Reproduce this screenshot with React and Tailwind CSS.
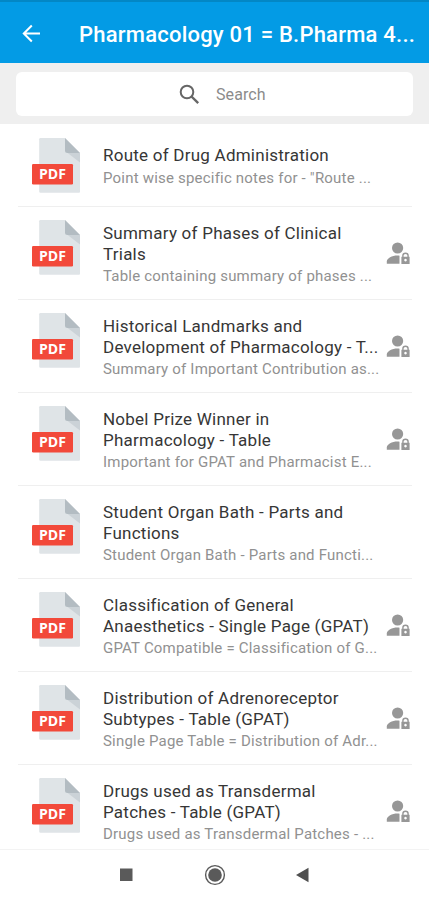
const items = [
  { title: ['Route of Drug Administration'], sub: 'Point wise specific notes for - "Route ...', locked: false },
  { title: ['Summary of Phases of Clinical', 'Trials'], sub: 'Table containing summary of phases ...', locked: true },
  { title: ['Historical Landmarks and', 'Development of Pharmacology - T...'], sub: 'Summary of Important Contribution as...', locked: true },
  { title: ['Nobel Prize Winner in', 'Pharmacology - Table'], sub: 'Important for GPAT and Pharmacist E...', locked: true },
  { title: ['Student Organ Bath - Parts and', 'Functions'], sub: 'Student Organ Bath - Parts and Functi...', locked: false },
  { title: ['Classification of General', 'Anaesthetics - Single Page (GPAT)'], sub: 'GPAT Compatible = Classification of G...', locked: true },
  { title: ['Distribution of Adrenoreceptor', 'Subtypes - Table (GPAT)'], sub: 'Single Page Table = Distribution of Adr...', locked: true },
  { title: ['Drugs used as Transdermal', 'Patches - Table (GPAT)'], sub: 'Drugs used as Transdermal Patches - ...', locked: true },
];

function PdfIcon() {
  return (
    <div className="relative h-[55px] w-[49px] shrink-0">
      <svg className="block" width="49" height="55" viewBox="0 0 49 55">
        <path d="M8.5 0H33l15 15v38.7a1 1 0 0 1-1 1H8.5a1.3 1.3 0 0 1-1.3-1.3V1.3A1.3 1.3 0 0 1 8.5 0z" fill="#dfe4e7" />
        <path d="M35 14.5 48 24.500V15z" fill="#cbd2d7" />
        <path d="M33 0l15 15H35.500a2.500 2.500 0 0 1-2.500-2.500z" fill="#b3bcc2" />
        <rect x="0" y="26" width="41" height="20.600" rx="1.300" fill="#f2493a" />
      </svg>
      <span className="absolute left-0 top-[25px] w-[41px] text-center font-['Open_Sans',sans-serif] text-[14px] font-bold leading-[21px] text-white">PDF</span>
    </div>
  );
}

function UserLockIcon() {
  return (
    <svg className="block shrink-0" width="24" height="23" viewBox="0 0 24 23" fill="#979797">
      <circle cx="11.600" cy="6" r="5.600" />
      <path d="M.8 21.700v-2.200c0-3.200 5.200-5.900 10.700-5.900.9 0 1.500.1 2 .2v7.900z" />
      <path fillRule="evenodd" d="M16.200 14.800v-1a3.300 3.300 0 0 1 6.600 0v1h.8v7.100h-8.200v-7.100zm1.400 0h3.800v-1a1.900 1.900 0 0 0-3.800 0zm1.900 2a1.300 1.300 0 1 0 .01 0z" />
    </svg>
  );
}

function Row({ item, last }) {
  const single = item.title.length === 1;
  return (
    <li className="relative flex h-[93px] pl-8 pt-[13px] first:h-[83px] first:pt-[14px]">
      <PdfIcon />
      <div className={`ml-[22px] w-[276px] shrink-0 whitespace-nowrap ${single ? 'pt-[7px]' : 'pt-[3px]'}`}>
        {item.title.map((line) => (
          <div key={line} className="text-[17px] leading-[21px] tracking-[0.24px] text-[#363636]">{line}</div>
        ))}
        <div className={`text-[15px] leading-[22px] tracking-[0.2px] text-[#919191] ${single ? 'mt-px' : ''}`}>{item.sub}</div>
      </div>
      {item.locked && <div className="ml-[7px] pt-[22px]"><UserLockIcon /></div>}
      {!last && <div className="absolute bottom-0 left-[18px] right-[17px] h-px bg-[#efefef]" />}
    </li>
  );
}

export default function App() {
  return (
    <div className="flex h-[900px] w-[429px] flex-col overflow-hidden bg-white font-[Roboto,sans-serif]">
      <header className="flex h-[63px] shrink-0 items-center border-t-2 border-[#0387c5] bg-[#039be5] pl-[21px] pt-[2px]">
        <svg width="20" height="20" viewBox="0 0 20 20" fill="none" stroke="#fff" strokeWidth="2">
          <path d="M19 9.500H3M10.800 1.500l-8 8 8 8" />
        </svg>
        <h1 className="ml-[38px] whitespace-nowrap pt-[2px] text-[22px] font-medium leading-7 tracking-[0.22px] text-white">Pharmacology 01 = B.Pharma 4...</h1>
      </header>
      <div className="h-[61px] shrink-0 bg-[#efefef] px-4 pt-[9px]">
        <div className="flex h-[44px] items-center rounded-md bg-white pl-[163px]">
          <svg width="21" height="21" viewBox="0 0 21 21" fill="none" stroke="#666" strokeWidth="2">
            <circle cx="8" cy="8" r="6.300" />
            <path d="m12.500 12.500 6.700 6.700" strokeWidth="2.400" />
          </svg>
          <span className="ml-4 pt-px text-[16px] leading-6 tracking-[0.1px] text-[#8b8b8b]">Search</span>
        </div>
      </div>
      <ul className="h-[725px] shrink-0 overflow-hidden">
        {items.map((item, i) => <Row key={item.sub} item={item} last={i === items.length - 1} />)}
      </ul>
      <nav className="flex flex-1 border-t border-[#f3f3f3]">
        <svg width="429" height="50" viewBox="0 0 429 50">
          <rect x="120" y="18.500" width="12.500" height="12.500" fill="#5a5a5a" />
          <circle cx="215" cy="25" r="9.400" fill="none" stroke="#5a5a5a" strokeWidth="1.400" />
          <circle cx="215" cy="25" r="6.800" fill="#5a5a5a" />
          <path d="M296 25l12.500-7.300v14.600z" fill="#4f4f4f" />
        </svg>
      </nav>
    </div>
  );
}
